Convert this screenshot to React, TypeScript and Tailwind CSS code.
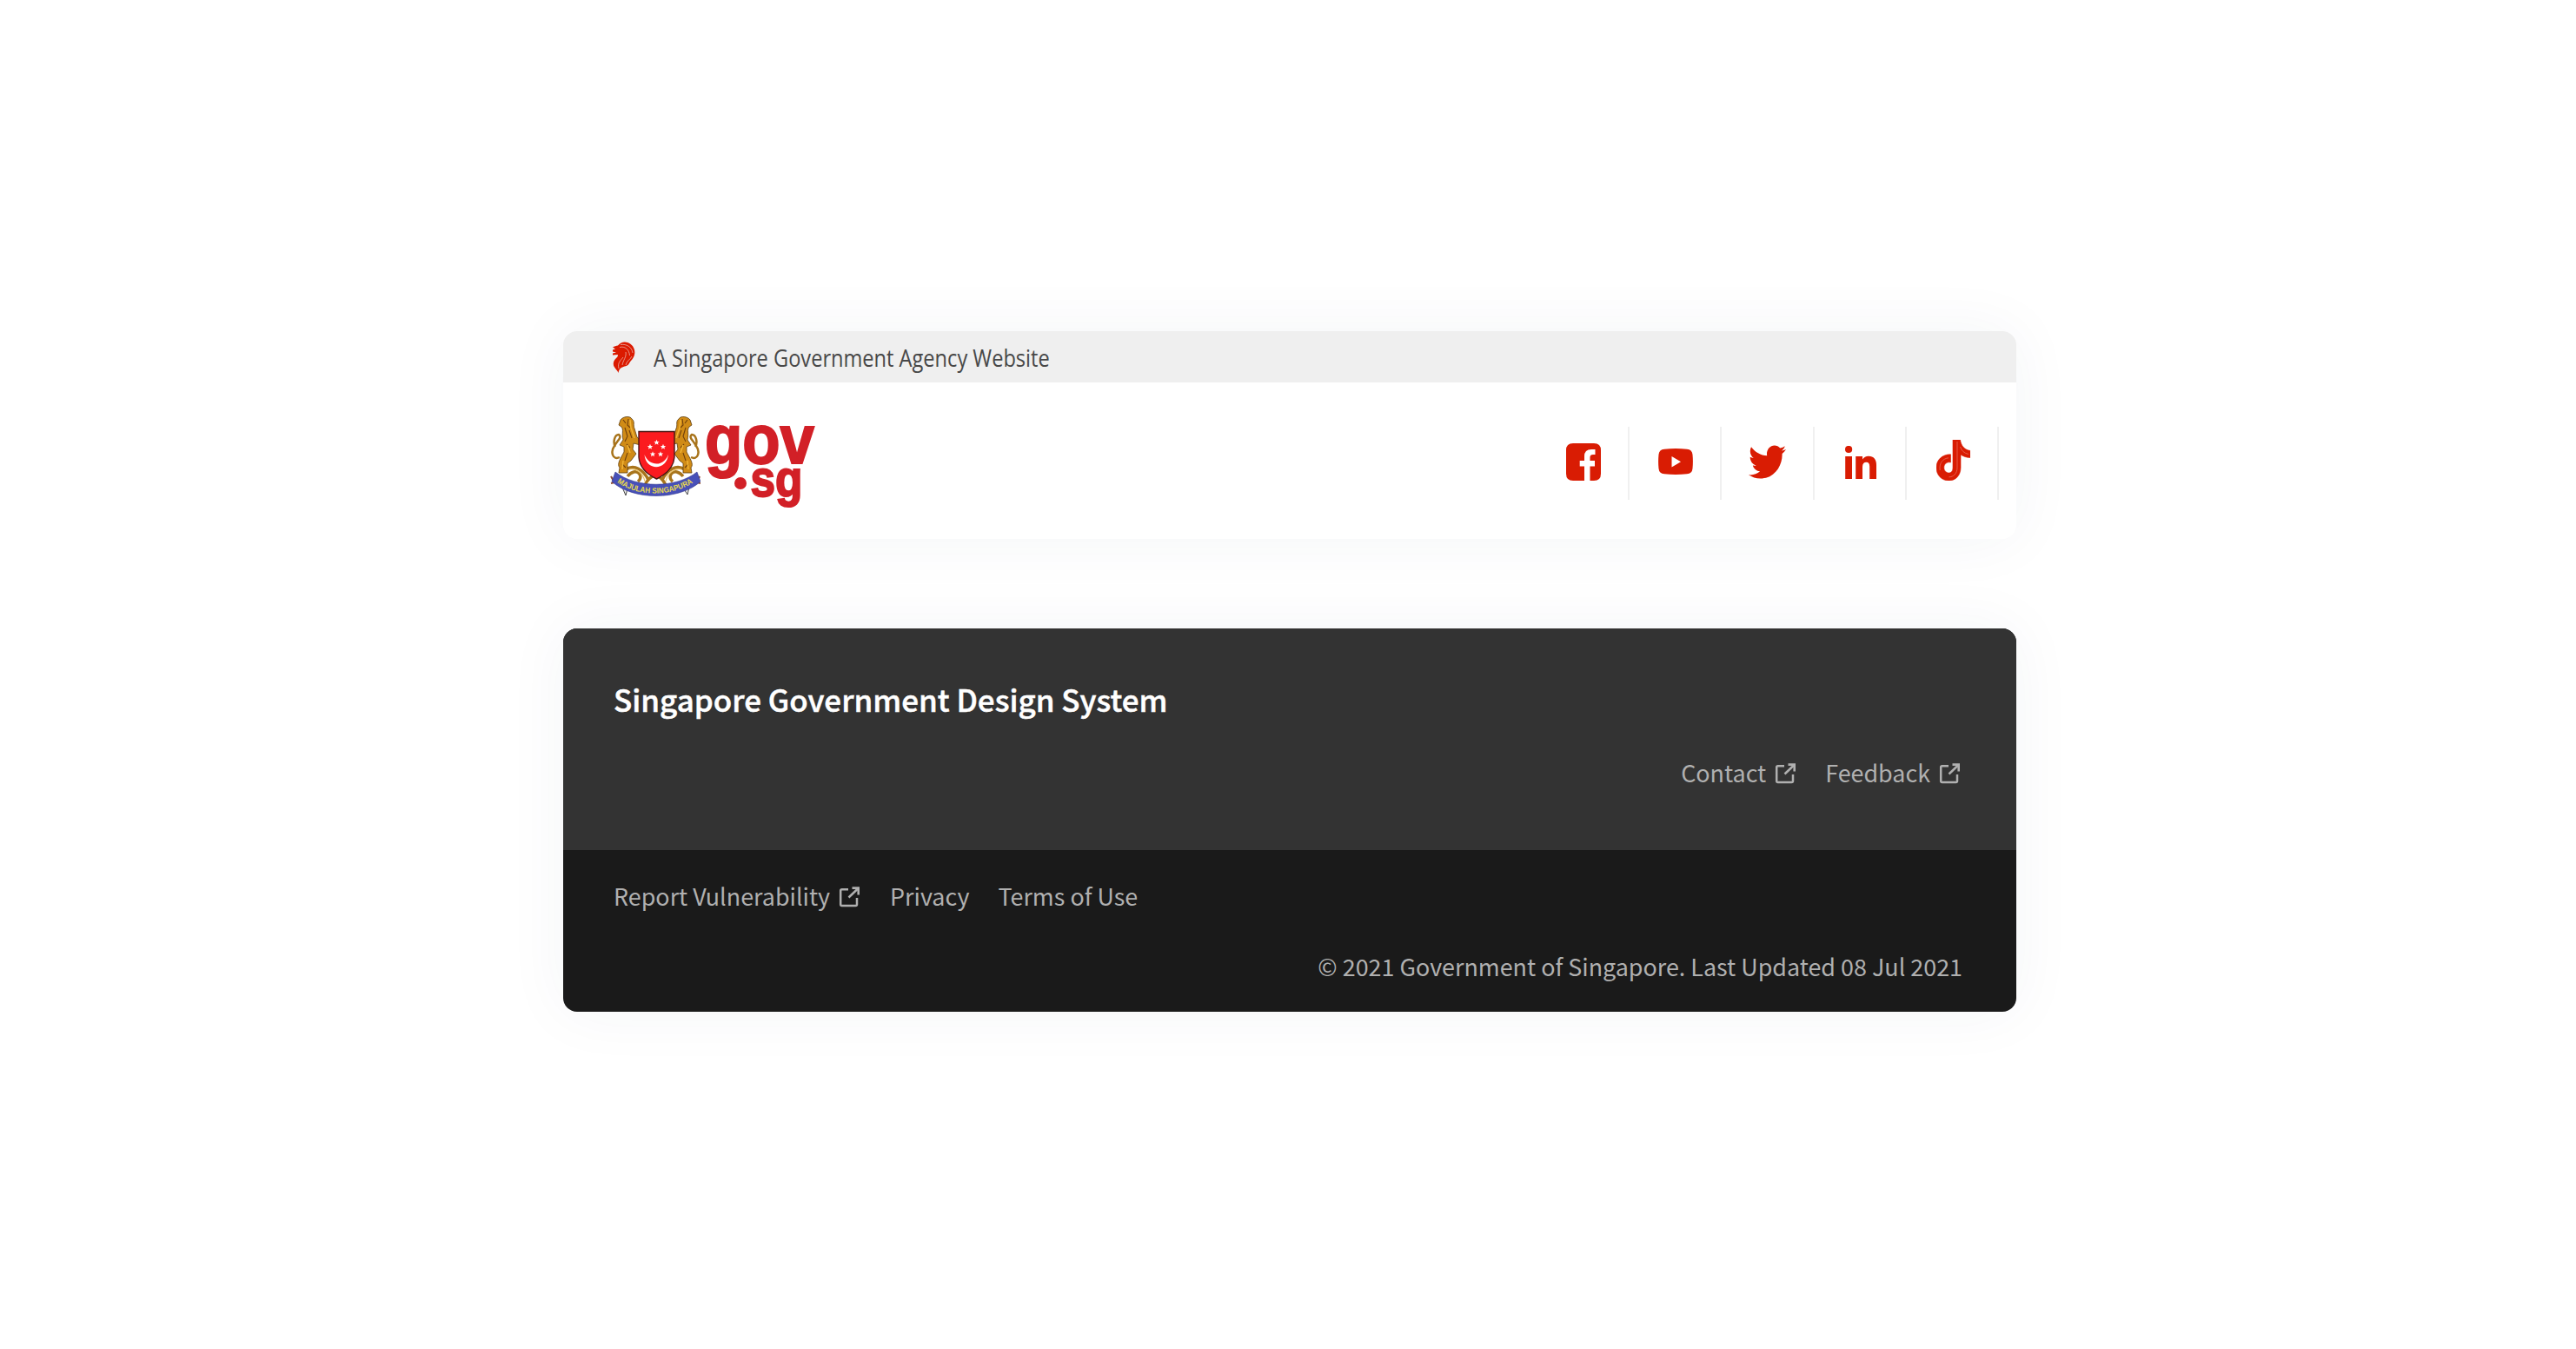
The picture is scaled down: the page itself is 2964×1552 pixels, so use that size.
import React from "react";
import { FaTwitter } from "react-icons/fa";

function LionHead() {
  return (
    <svg viewBox="0 0 27 36" className="block h-[36px] w-[27px]" fill="#db1a00">
      <path d="M1 6.500 C3 5 5 5 7 4.500 C10 1 14 -0.500 18 1 C24 3 27.500 9 26 15 C25 20 22 21 20 25 C18 29 14 28 11 30 C9 31 8 33 7.500 36 C6 32 2 30 1.800 26 C1.500 22 4 20 6.500 17.500 L7 15 L1 15.500 L1 13.500 L5 12.500 L1 11.500 L1 9.500 L4 8.500 Z" />
      <path d="M10 3.500 C17 2.500 23 6 24 13 M9 6.500 C15 5 20 9 20.500 16 M13 18 C11 21 6 24 8 31 M16 12 C17 18 13 21 12 27 M23 17 C21 21 17 22 16 27" fill="none" stroke="#efefef" strokeWidth="0.8" opacity="0.7" />
    </svg>
  );
}

function CrestLion() {
  return (
    <g>
      <path d="M11 48 C3 52 0 42 5 35 C9 28 14 25 10 22 C5 22 3 31 6 36" fill="none" stroke="#a8741c" strokeWidth="2.500" />
      <path d="M12 5 C15 1 23 0 25 4 C29 7 26 11 28 15 L31 25 L37 30 L35 34 L27 32 L26 39 L30 44 L24 52 L20 55 L20 66 L10 66 L11 60 C7 56 13 48 16 42 L16 36 L11 34 L15 28 C13 20 16 17 13 13 L10 11 Z" fill="#d08b16" stroke="#5d3e12" strokeWidth="0.8" />
      <path d="M15 5 L18 9 M21 4 L20 11 L23 14 M17 14 L20 24 L17 30 M22 17 L25 26 M19 33 L23 37 M20 43 L17 52 M14 56 L18 60" fill="none" stroke="#70400c" strokeWidth="1.100" />
      <path d="M23 5 L24 14 L28 26 M20 34 L23 43 M15 52 L14 62" fill="none" stroke="#f2b637" strokeWidth="1.400" />
    </g>
  );
}

function Star({ x, y }: { x: number; y: number }) {
  return (
    <path
      transform={`translate(${x} ${y})`}
      d="M0 -3.300 L0.900 -1 L3.200 -1 L1.400 0.500 L2 2.800 L0 1.400 L-2 2.800 L-1.400 0.500 L-3.200 -1 L-0.900 -1 Z"
      fill="#fff"
    />
  );
}

function Crest() {
  return (
    <svg viewBox="0 0 104 94" className="block h-[94px] w-[104px] shrink-0">
      <path d="M12 78 L18 92 L21 80 M92 78 L89 91 L82 80" fill="#eee" stroke="#333" strokeWidth="0.900" />
      <path d="M18 62 C28 56 38 62 44 74 M86 62 C76 56 66 62 60 74 M20 70 C30 58 40 70 32 76 M84 70 C74 58 64 70 72 76 M40 80 C47 66 57 66 64 80" fill="none" stroke="#a8741c" strokeWidth="3.500" />
      <path d="M22 62 C30 60 38 66 40 76 M82 62 C74 60 66 66 64 76" fill="none" stroke="#ecc46a" strokeWidth="1.200" />
      <CrestLion />
      <g transform="translate(104 0) scale(-1 1)">
        <CrestLion />
      </g>
      <path d="M33 18.500 H74 V48 C73 60 64 68 53.500 73 C43 68 34 60 33 48 Z" fill="#fb1b1f" stroke="#4a1714" strokeWidth="1.400" />
      <path d="M39.500 45 C41 64 65 64 67 45 C62 59 45 59 39.500 45 Z" fill="#fff" />
      <Star x={53.500} y={31} />
      <Star x={46} y={36} />
      <Star x={61} y={36} />
      <Star x={49} y={44.500} />
      <Star x={58} y={44.500} />
      <path d="M1 70 L5 77 L1 78 M103 70 L100 77 L104 78" fill="none" stroke="#8b4a35" strokeWidth="2" />
      <path d="M6 65 C30 84 76 84 100 65 L104 76 C80 98 26 98 2 76 Z" fill="#4750b8" stroke="#34398c" strokeWidth="0.600" />
      <path id="motto" d="M8 77 C32 94 74 94 99 75" fill="none" />
      <text fontFamily="Liberation Sans, sans-serif" fontWeight="700" fontSize="9" fill="#e6d94e" textLength="92" lengthAdjust="spacingAndGlyphs">
        <textPath href="#motto">MAJULAH SINGAPURA</textPath>
      </text>
    </svg>
  );
}

function GovWordmark() {
  return (
    <svg viewBox="0 -28 134 138" className="block h-[138px] w-[134px] shrink-0 overflow-visible" fill="#d22027" stroke="#d22027" strokeWidth="2" fontFamily="Liberation Sans, sans-serif" fontWeight="700">
      <text x="1" y="52" fontSize="79" textLength="126" lengthAdjust="spacingAndGlyphs">gov</text>
      <circle cx="42" cy="75" r="6" />
      <text x="53.500" y="90" fontSize="60" textLength="60" lengthAdjust="spacingAndGlyphs">sg</text>
    </svg>
  );
}

function Facebook() {
  return (
    <svg viewBox="0 0 40 43" className="ml-[2px] block h-[43px] w-[40px]">
      <path d="M8 0 H32 Q40 0 40 8 V35 Q40 43 32 43 H27.500 V26.500 H33 V20 H27.500 V16 Q27.500 13 31 13 H33.500 V7 H29 Q21 7 21 15 V20 H15.700 V26.500 H21 V43 H8 Q0 43 0 35 V8 Q0 0 8 0 Z" fill="#d91c03" />
    </svg>
  );
}

function Youtube() {
  return (
    <svg viewBox="0 0 40 30" className="ml-[2px] block h-[30px] w-[40px]">
      <path fillRule="evenodd" d="M7 0.700 Q20 -0.700 33 0.700 Q39 1 39.500 7 Q40.300 15 39.500 23 Q39 29 33 29.300 Q20 30.700 7 29.300 Q1 29 0.500 23 Q-0.300 15 0.500 7 Q1 1 7 0.700 Z M15.500 9 V21.500 L26 15.200 Z" fill="#d91c03" />
    </svg>
  );
}

function LinkedIn() {
  return (
    <svg viewBox="0 0 36 38" className="ml-[2px] mt-[2px] block h-[38px] w-[36px]" fill="#d91c03">
      <circle cx="4.100" cy="4" r="4.100" />
      <path d="M0.200 12 H8 V38 H0.200 Z" />
      <path d="M12.200 12 H20 V15.500 C21.500 13 24 11.700 27 11.700 C33 11.700 36 15.500 36 22 V38 H28.200 V23.500 C28.200 20.500 27 18.800 24.500 18.800 C21.700 18.800 20 20.700 20 24 V38 H12.200 Z" />
    </svg>
  );
}

function Tiktok() {
  return (
    <svg viewBox="0 0 39 47" className="mb-[3px] ml-[3px] block h-[47px] w-[39px]">
      <path d="M19 0 H27.500 C28.500 7 32.500 11.500 39 12.500 V20.500 C34.500 20.500 31 19 28 17 V32 C28 41 22 47 14.500 47 C6 47 0 40.500 0 32 C0 23 7 16.500 16.500 16.800 V26 C12 25 8.800 28 8.800 32 C8.800 35.500 11.500 38 14.300 38 C17.500 38 19 35.500 19 32 Z" fill="#d91c03" stroke="#d91c03" strokeWidth="0.600" />
      <path d="M24 2 V32 C24 39 19.500 42.800 14.500 42.800 M4.200 35 C3 26 8 21.500 14 20.800 M27.500 8 C29 12.500 32 15.500 37 16.500" fill="none" stroke="#ea6a58" strokeWidth="0.800" />
    </svg>
  );
}

function ExternalIcon() {
  return (
    <svg viewBox="0 0 24 24" className="relative top-px block h-[24px] w-[24px]" fill="none" stroke="#b0b0b0" strokeWidth="2.500">
      <path d="M11 3.200 H3.700 Q2.200 3.200 2.200 4.700 V20.500 Q2.200 22 3.700 22 H19.500 Q21 22 21 20.500 V13" />
      <path d="M11.500 12.500 L22 2.500" />
      <path d="M15.500 1.700 H22.800 V9.500" strokeWidth="2.800" />
    </svg>
  );
}

const socials = [
  { name: "Facebook", icon: <Facebook /> },
  { name: "YouTube", icon: <Youtube /> },
  { name: "Twitter", icon: <FaTwitter className="ml-px h-[47px] w-[43px]" preserveAspectRatio="none" /> },
  { name: "LinkedIn", icon: <LinkedIn /> },
  { name: "TikTok", icon: <Tiktok /> },
];

export default function App() {
  return (
    <main className="flex h-[1552px] w-[2964px] flex-col items-center bg-white pl-[4px] pt-[381px] font-['Noto_Sans_CJK_SC',sans-serif]">
      <header className="h-[239px] w-[1672px] overflow-hidden rounded-[16px] bg-white shadow-[0_0_72px_rgba(30,65,100,0.05)]">
        <div className="flex h-[59px] items-center bg-[#efefef] pl-[56px]">
          <LionHead />
          <p className="ml-[21px] mt-[2px] origin-left scale-x-[0.874] whitespace-nowrap font-['Open_Sans',sans-serif] text-[27px] leading-none text-[#484848]">
            A Singapore Government Agency Website
          </p>
        </div>
        <div className="flex justify-between">
          <div className="flex pl-[54px] pt-[38px]">
            <Crest />
            <div className="-mt-[25px] ml-[4px]">
              <GovWordmark />
            </div>
          </div>
          <nav className="mr-[20px] mt-[51px] flex">
            {socials.map((s) => (
              <a key={s.name} aria-label={s.name} className="flex h-[84px] w-[106.250px] items-center justify-center border-r-2 border-[#f0f0f0] pb-[4px] text-[#d91c03]">
                {s.icon}
              </a>
            ))}
          </nav>
        </div>
      </header>
      <footer className="mt-[103px] h-[441px] w-[1672px] overflow-hidden rounded-[16px] bg-[#1a1a1a] text-[26.900px] leading-[40px] text-[#b0b0b0] shadow-[0_0_72px_rgba(30,65,100,0.05)]">
        <section className="h-[255px] bg-[#333333] px-[58px] pt-[57px]">
          <h2 className="whitespace-nowrap text-[34.950px] font-medium leading-[48px] text-white [-webkit-text-stroke:0.5px_white]">Singapore Government Design System</h2>
          <div className="mt-[41px] flex justify-end gap-[34px] pr-[7px]">
            <a className="flex items-center gap-[10px]">Contact <ExternalIcon /></a>
            <a className="flex items-center gap-[10px]">Feedback <ExternalIcon /></a>
          </div>
        </section>
        <section className="px-[58px] pt-[33px]">
          <div className="flex gap-[33px]">
            <a className="mr-[2px] flex items-center gap-[10px]">Report Vulnerability <ExternalIcon /></a>
            <a>Privacy</a>
            <a>Terms of Use</a>
          </div>
          <p className="mt-[41px] pr-[4px] text-right">© 2021 Government of Singapore. Last Updated 08 Jul 2021</p>
        </section>
      </footer>
    </main>
  );
}
